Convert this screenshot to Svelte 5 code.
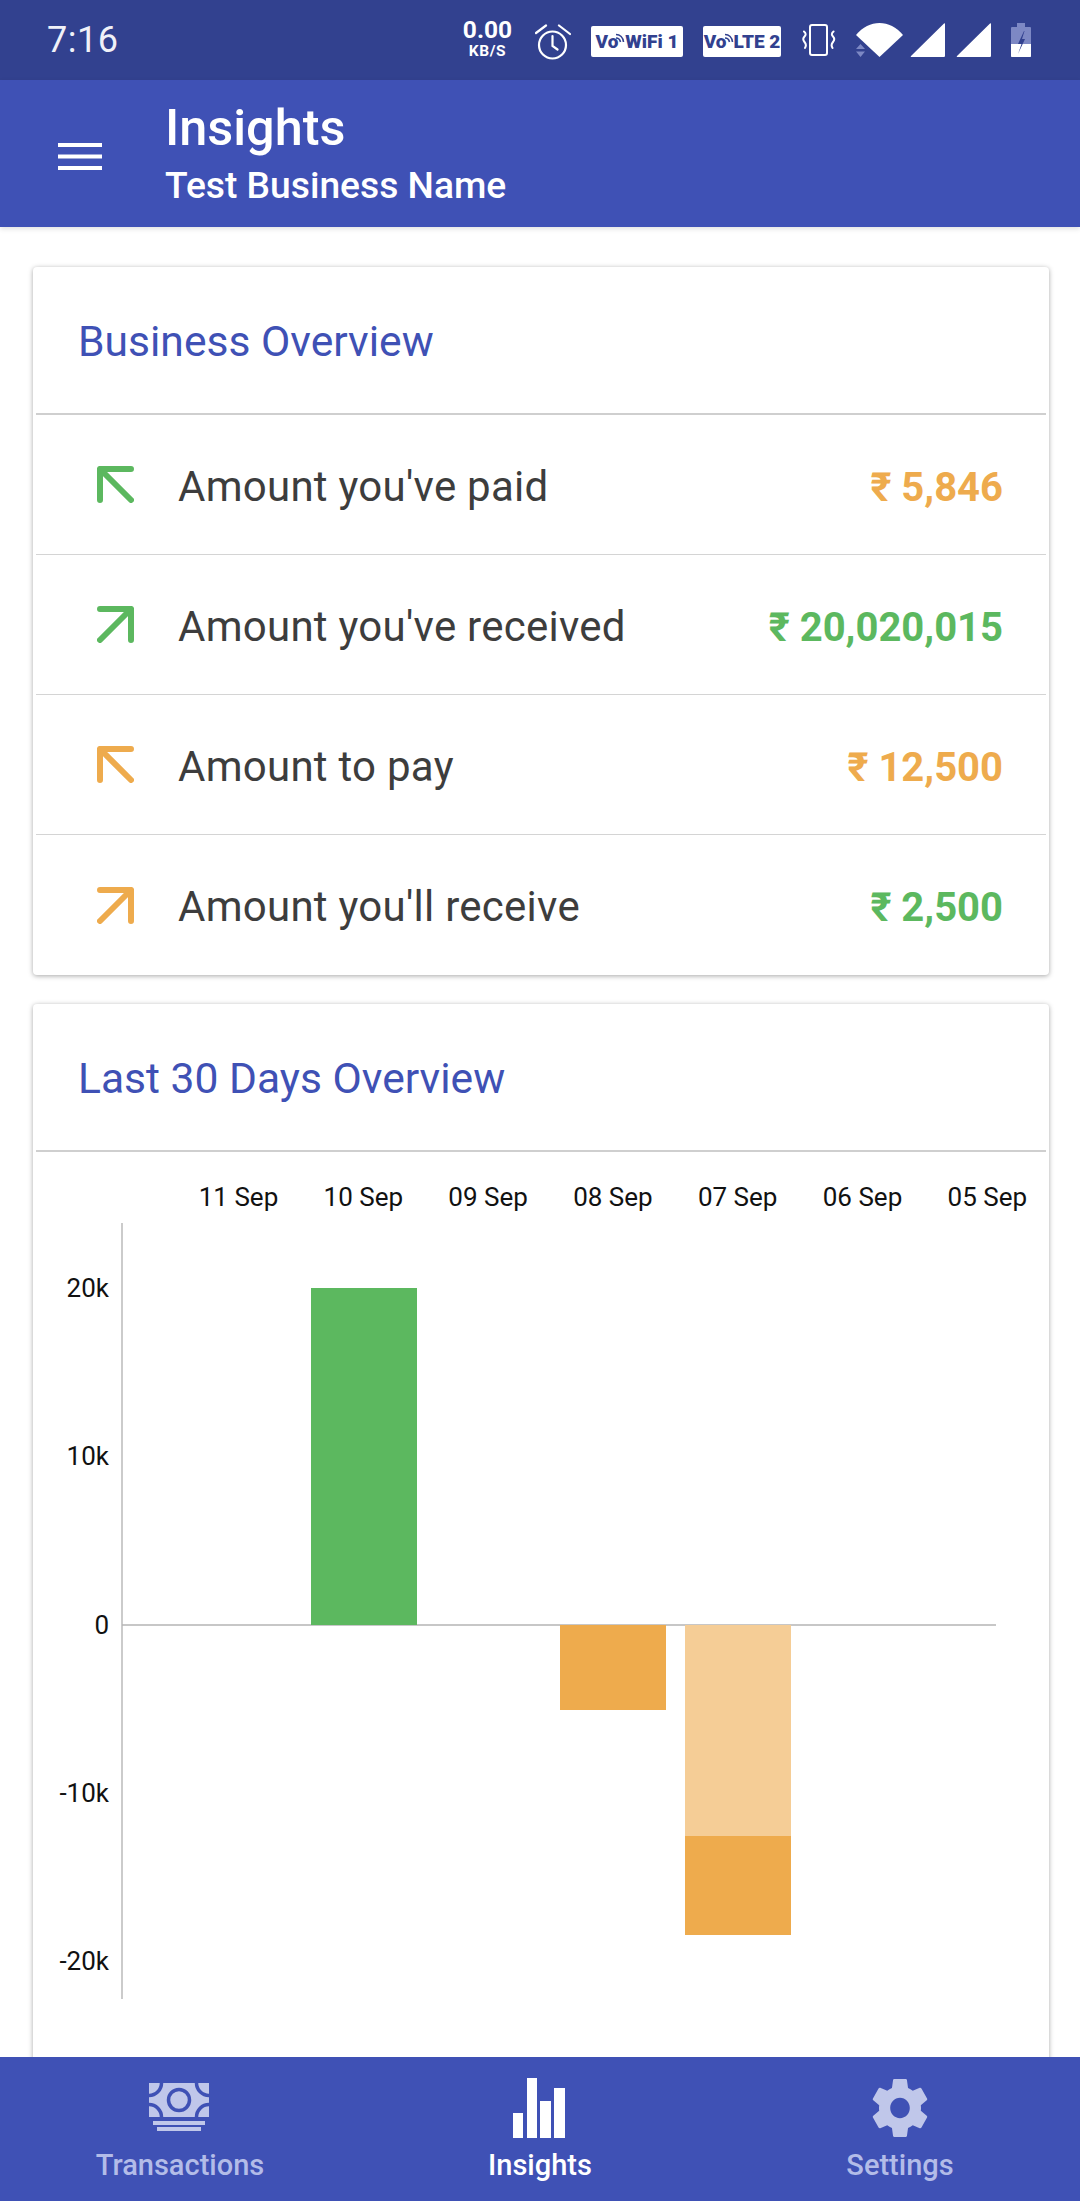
<script>
  const rows = [
    { label: "Amount you've paid", value: '₹ 5,846', arrow: 'in', tone: 'green', valueTone: 'orange' },
    { label: "Amount you've received", value: '₹ 20,020,015', arrow: 'out', tone: 'green', valueTone: 'green' },
    { label: 'Amount to pay', value: '₹ 12,500', arrow: 'in', tone: 'orange', valueTone: 'orange' },
    { label: "Amount you'll receive", value: '₹ 2,500', arrow: 'out', tone: 'orange', valueTone: 'green' }
  ];
  const days = ['11 Sep', '10 Sep', '09 Sep', '08 Sep', '07 Sep', '06 Sep', '05 Sep'];
  const ticks = [['20k', 136], ['10k', 304], ['0', 473], ['-10k', 641], ['-20k', 809]];
</script>

{#snippet arcs()}
  <svg class="arcs" width="11" height="13" viewBox="0 0 11 13" fill="none" stroke="#32418f" stroke-width="1.600">
    <path d="M1 3.500C5 3.500 8 6.500 8.500 11M1 7C3.500 7 5 8.500 5.500 11" />
  </svg>
{/snippet}

<div class="phone">
  <header class="status">
    <span class="clock">7:16</span>
    <div class="status-icons">
      <div class="speed"><b>0.00</b><small>KB/S</small></div>
      <svg class="alarm" width="36" height="36" viewBox="0 0 36 36" fill="none" stroke="#fff" stroke-width="2.200" stroke-linecap="round">
        <circle cx="17.500" cy="21" r="13.500" />
        <path d="M17.500 12v10l5 3.500M1 9l10-7.500M24 1.500 35 10" />
      </svg>
      <span class="tag wifi">Vo{@render arcs()}WiFi&nbsp;1</span>
      <span class="tag lte">Vo{@render arcs()}LTE&nbsp;2</span>
      <svg class="vibrate" width="34" height="32" viewBox="0 0 34 32" fill="none" stroke="#fff">
        <rect x="8" y="1" width="17" height="30" rx="2" stroke-width="2" />
        <path d="M2 7.500 Q5 10 2.500 12.500 T2.500 18 T3 24M31.500 7.500 Q28.500 10 31 12.500 T31 18 T30.500 24" stroke-width="2" stroke-linecap="round" />
      </svg>
      <svg class="wifi-icon" width="47" height="34" viewBox="0 0 47 34">
        <path d="M0 12C13-4 34-4 47 12L23.500 34Z" fill="#fff" />
        <path d="M4.500 21 9 26H0ZM4.500 34 0 28.500H9Z" fill="#7d88c4" />
      </svg>
      <svg class="sig-a" width="35" height="34" viewBox="0 0 35 34"><path d="M1 33 34 .5c.5-.5 1-.2 1 .5V32.500c0 1-.5 1.500-1.500 1.500H1.500C.8 34 .5 33.500 1 33Z" fill="#fff" /></svg>
      <svg class="sig-b" width="35" height="34" viewBox="0 0 35 34"><path d="M1 33 34 .5c.5-.5 1-.2 1 .5V32.500c0 1-.5 1.500-1.500 1.500H1.500C.8 34 .5 33.500 1 33Z" fill="#fff" /></svg>
      <svg class="battery" width="20" height="34" viewBox="0 0 20 34">
        <path d="M6 0h8v4h5q1 0 1 1v29H0V5q0-1 1-1h5Z" fill="#7d88c4" />
        <path d="M0 21h20v12q0 1-1 1H1q-1 0-1-1Z" fill="#fff" />
        <path d="M13 8 7 21h3.500L7 31l7-15h-3l2.500-8Z" fill="#32418f" />
      </svg>
    </div>
  </header>

  <div class="appbar">
    <svg class="menu" width="44" height="27" viewBox="0 0 44 27"><path d="M0 2h44M0 13.500h44M0 25h44" stroke="#fff" stroke-width="4" /></svg>
    <div class="titles">
      <h1>Insights</h1>
      <p>Test Business Name</p>
    </div>
  </div>

  <main>
    <section class="card">
      <h2>Business Overview</h2>
      {#each rows as row}
        <div class="row">
          <svg class="arrow {row.tone}" width="37" height="37" viewBox="0 0 37 37" fill="none" stroke-width="6" stroke-linecap="round" stroke-linejoin="round">
            {#if row.arrow === 'in'}
              <path d="M34 3H3V34M3 3 34 34" />
            {:else}
              <path d="M3 3H34V34M34 3 3 34" />
            {/if}
          </svg>
          <span class="label">{row.label}</span>
          <span class="value {row.valueTone}">{row.value}</span>
        </div>
      {/each}
    </section>

    <section class="card second">
      <h2>Last 30 Days Overview</h2>
      <svg class="chart" width="1016" height="900" viewBox="0 0 1016 900">
        {#each days as day, i}
          <text x={205.500 + i * 124.800} y="54" text-anchor="middle">{day}</text>
        {/each}
        {#each ticks as [label, y]}
          <text x="76" y={y + 9} text-anchor="end">{label}</text>
        {/each}
        <path d="M89 71V847" stroke="#a8a8a8" stroke-width="1.200" />
        <path d="M89 473H963" stroke="#b5b5b5" stroke-width="1.500" />
        <rect x="278" y="136" width="106" height="337" fill="#5cb85f" />
        <rect x="527" y="473" width="106" height="85" fill="#eeab4d" />
        <rect x="652" y="473" width="106" height="211" fill="#f5cd96" />
        <rect x="652" y="684" width="106" height="99" fill="#eeab4d" />
      </svg>
    </section>
  </main>

  <nav>
    <div class="tab">
      <div class="tab-icon">
        <svg class="i-money" width="60" height="48" viewBox="0 0 60 48">
          <rect x="0" y="0" width="60" height="34" fill="#c0c7ea" />
          <g fill="none" stroke="#3f51b5" stroke-width="3.500">
            <circle cx="30" cy="17" r="10.500" />
            <path d="M0 12.500A12.500 12.500 0 0 0 12.500 0M60 12.500A12.500 12.500 0 0 1 47.500 0M0 21.500A12.500 12.500 0 0 1 12.500 34M60 21.500A12.500 12.500 0 0 0 47.500 34" />
          </g>
          <rect x="4" y="38" width="52" height="4" fill="#c0c7ea" />
          <rect x="8" y="44" width="44" height="4" fill="#c0c7ea" />
        </svg>
      </div>
      <span>Transactions</span>
    </div>
    <div class="tab active">
      <div class="tab-icon">
        <svg class="i-bars" width="52" height="60" viewBox="0 0 52 60" fill="#fff">
          <rect x="0" y="35" width="10" height="25" />
          <rect x="14" y="0" width="10" height="60" />
          <rect x="27" y="23" width="11" height="37" />
          <rect x="41" y="10" width="11" height="50" />
        </svg>
      </div>
      <span>Insights</span>
    </div>
    <div class="tab">
      <div class="tab-icon">
        <svg class="i-gear" width="56" height="58" viewBox="2 2 20 20" fill="#c0c7ea" preserveAspectRatio="none">
          <path fill-rule="evenodd" d="M19.430 12.980c.04-.32.07-.640.07-.980s-.03-.660-.07-.980l2.110-1.650c.19-.150.240-.420.120-.640l-2-3.460c-.12-.220-.390-.300-.610-.220l-2.490 1c-.520-.400-1.080-.730-1.690-.980l-.380-2.650C14.460 2.180 14.250 2 14 2h-4c-.250 0-.460.180-.490.420l-.380 2.650c-.610.250-1.170.590-1.690.980l-2.490-1c-.230-.090-.490 0-.610.220l-2 3.460c-.130.220-.070.490.120.640l2.110 1.650c-.04.320-.07.650-.07.980s.03.660.07.980l-2.110 1.650c-.19.150-.240.420-.120.640l2 3.460c.12.220.390.300.610.220l2.490-1c.520.400 1.080.730 1.690.980l.380 2.650c.03.240.240.420.490.420h4c.250 0 .460-.180.490-.420l.380-2.650c.610-.250 1.170-.590 1.690-.980l2.490 1c.230.090.490 0 .610-.220l2-3.460c.12-.220.070-.490-.120-.640l-2.110-1.650zM12 15.500c-1.930 0-3.500-1.570-3.500-3.500s1.570-3.500 3.500-3.500 3.500 1.570 3.500 3.500-1.570 3.500-3.500 3.500z" />
        </svg>
      </div>
      <span>Settings</span>
    </div>
  </nav>
</div>

<style>
  :global(body) { margin: 0; background: #fff; }
  * { box-sizing: border-box; }
  .phone {
    width: 1080px; height: 2201px; position: relative; overflow: hidden; background: #fff;
    display: flex; flex-direction: column; font-family: Roboto, sans-serif;
  }
  .status {
    height: 80px; flex: none; background: #32418f; color: #fff;
    display: flex; align-items: center; justify-content: space-between; padding: 0 49px 0 47px;
  }
  .clock { font-size: 36px; letter-spacing: .5px; color: #f0f1f8; }
  .status-icons { display: flex; align-items: center; height: 80px; }
  .speed { display: flex; flex-direction: column; align-items: center; width: 49px; margin: -5px 23px 0 0; white-space: nowrap; }
  .speed b { font-size: 24.500px; font-weight: 700; line-height: 26px; height: 26px; }
  .speed small { font-size: 15.500px; font-weight: 700; line-height: 16px; height: 16px; letter-spacing: .6px; }
  .alarm { margin-right: 20px; margin-top: 4px; }
  .tag {
    height: 31px; background: #fff; color: #32418f; border-radius: 2px; font-weight: 900; font-size: 19px;
    display: flex; align-items: center; justify-content: center; white-space: nowrap; margin-top: 2px;
  }
  .arcs { margin: -8px -1px 0 -3px; flex: none; }
  .wifi { width: 92px; margin-right: 20px; }
  .lte { width: 78px; margin-right: 21px; }
  .vibrate { margin-right: 20px; }
  .wifi-icon { margin-right: 7px; }
  .sig-a { margin-right: 11px; }
  .sig-b { margin-right: 20px; }
  .appbar {
    height: 147px; flex: none; background: #3f51b5; color: #fff; display: flex; align-items: center;
    padding-left: 58px; position: relative; box-shadow: 0 2px 5px rgba(0,0,0,.12);
  }
  .menu { margin-right: 63px; margin-top: 6px; flex: none; }
  .titles { display: flex; flex-direction: column; margin-top: 5px; }
  h1 { margin: 0; font-size: 50.400px; font-weight: 500; line-height: 58px; }
  p { margin: 0; font-size: 37.200px; font-weight: 500; line-height: 56px; }
  main { flex: 1; padding: 40px 31px 0 33px; display: flex; flex-direction: column; gap: 29px; min-height: 0; }
  .card {
    background: #fff; border-radius: 4px; box-shadow: 0 1px 5px rgba(0,0,0,.35); flex: none; overflow: hidden;
  }
  h2 {
    margin: 0 3px; height: 148px; padding: 2px 0 0 42px; display: flex; align-items: center;
    font-size: 42.600px; font-weight: 400; color: #3f51b5; border-bottom: 2px solid #cfcfcf;
  }
  .row {
    height: 140px; margin: 0 3px; display: flex; align-items: center; padding: 0 43px 0 61px; border-bottom: 1px solid #d4d4d4;
  }
  .row:last-child { border-bottom: none; }
  .arrow { margin-right: 44px; flex: none; }
  .arrow.green { stroke: #5cb85f; }
  .arrow.orange { stroke: #eeab4d; }
  .label { font-size: 42px; color: #3d3d3d; letter-spacing: .26px; flex: 1; padding-top: 3px; }
  .value { font-size: 40px; font-weight: 700; padding-top: 5px; }
  .value.green { color: #5cb85f; }
  .value.orange { color: #eeab4d; }
  .second { height: 1100px; }
  .chart { display: block; font-size: 26px; fill: #111; }
  nav {
    position: absolute; left: 0; right: 0; bottom: 0; height: 144px; background: #3f51b5;
    display: grid; grid-template-columns: repeat(3, 1fr);
  }
  .tab { display: flex; flex-direction: column; align-items: center; color: #b3bce8; font-size: 29px; font-weight: 500; line-height: 36px; }
  .tab-icon { height: 90px; }
  .tab-icon svg { display: block; }
  .i-money { margin-top: 26px; margin-left: -3px; }
  .i-bars { margin-top: 21px; margin-left: -2px; }
  .i-gear { margin-top: 22px; margin-left: 0; }
  .tab.active { color: #fff; }
</style>
